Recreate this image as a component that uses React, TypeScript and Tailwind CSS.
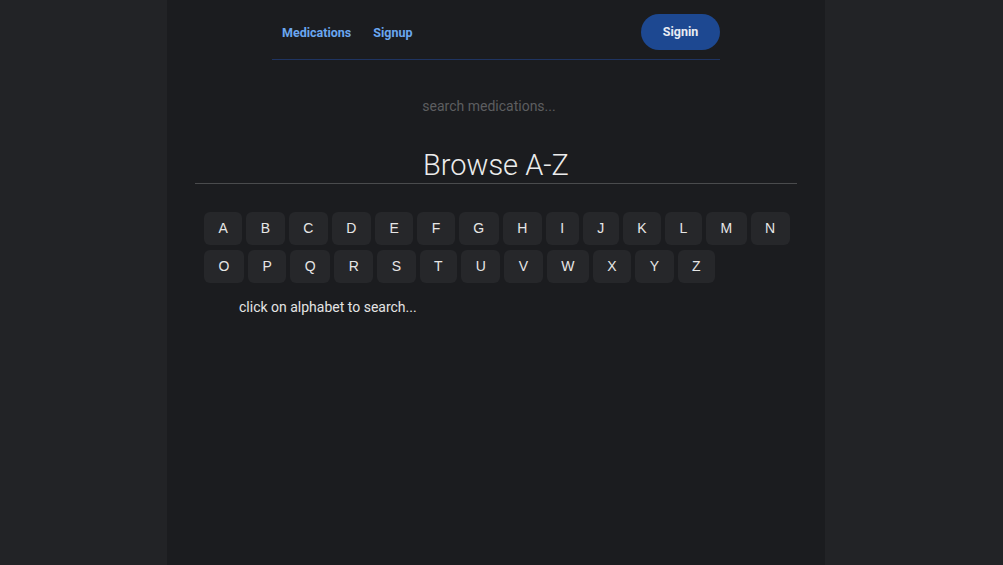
import React from 'react';

const letters = 'ABCDEFGHIJKLMNOPQRSTUVWXYZ'.split('');

const Navbar: React.FC = () => (
  <nav className="mx-auto flex h-[60px] w-[448px] items-center justify-between border-b border-[#1f3461] pl-[10px] pt-[4px]">
    <div className="mt-[3px] flex items-center gap-[22px] text-[12.5px] font-bold text-[#6aa6ef]">
      <a>Medications</a>
      <a>Signup</a>
    </div>
    <button className="flex h-[36px] w-[79px] items-center justify-center rounded-full bg-[#1d4891] pt-[2px] text-[12.5px] font-bold text-[#e8ecf3]">
      Signin
    </button>
  </nav>
);

export default function App() {
  return (
    <div className="flex min-h-[565px] w-full justify-center bg-[#222326] pr-[11px] font-['Roboto',sans-serif]">
      <div className="min-h-[565px] w-[658px] bg-[#1b1c1f]">
        <Navbar />
        <div className="mt-[36px] flex justify-center pr-[14px]">
          <input
            className="w-[200px] bg-transparent text-center text-[14px] text-[#cfcfcf] placeholder-[#5d5e60] outline-none"
            placeholder="search medications..."
          />
        </div>
        <div className="mx-[28px] mt-[30px] border-b border-[#4a4b4d]">
          <h1 className="text-center text-[29px] font-light leading-[36px] text-[#ececec]">Browse A-Z</h1>
        </div>
        <div className="ml-[37px] mr-[20px] mt-[28px] flex flex-wrap gap-x-[4px] gap-y-[5px] font-['Liberation_Sans',sans-serif]">
          {letters.map((l) => (
            <button
              key={l}
              className="h-[33px] rounded-[6px] bg-[#26272a] px-[14.5px] text-[14px] text-[#e6e6e6]"
            >
              {l}
            </button>
          ))}
        </div>
        <p className="ml-[72px] mt-[14px] text-[14px] text-[#e4e4e4]">click on alphabet to search...</p>
      </div>
    </div>
  );
}
